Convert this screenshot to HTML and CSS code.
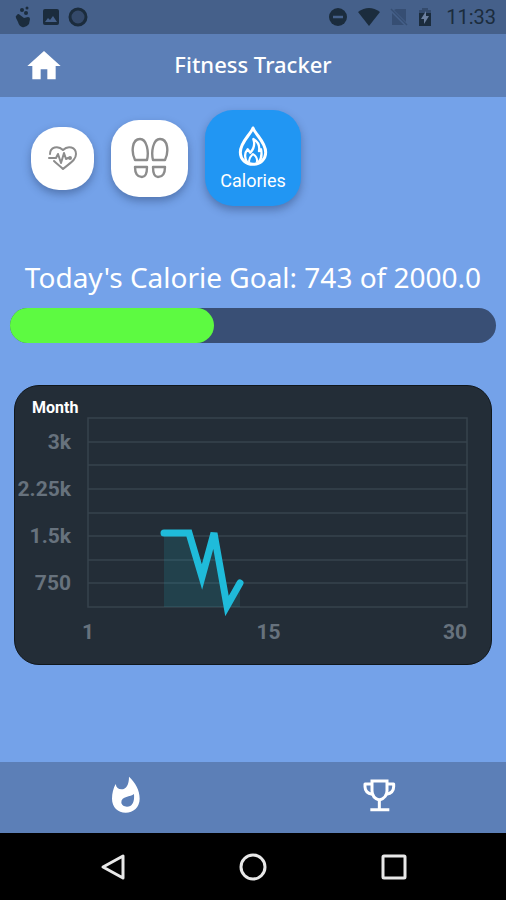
FILE: index.html
```html
<!DOCTYPE html>
<html lang="en">

<head>
    <meta charset="UTF-8">
    <meta name="viewport" content="width=device-width, initial-scale=1.0">
    <title>Fitness Tracker</title>
    <link rel="stylesheet" href="styles.css">
</head>

<body>
    <div class="status-bar">
        <div class="status-group">
            <svg width="20" height="22" viewBox="0 0 20 22">
                <path d="M3 9q1-2 3 0l4 3 4-1q2 0 2 2l-1 5q-3 4-7 3-3-1-4-5l-2-4q-1-2 1-3z" fill="#1b2c3d" />
                <circle cx="8" cy="4" r="2" fill="#1b2c3d" />
                <circle cx="13" cy="2" r="1.5" fill="#1b2c3d" />
                <circle cx="12" cy="7" r="2" fill="#1b2c3d" />
            </svg>
            <svg width="18" height="18" viewBox="0 0 18 18">
                <rect x="1" y="1" width="16" height="16" rx="2" fill="#1b2c3d" />
                <path d="M3 14l3-4 2 2 3-4 4 6z" fill="#45608a" />
            </svg>
            <svg width="20" height="20" viewBox="0 0 20 20">
                <circle cx="10" cy="10" r="8" fill="#34496a" stroke="#1b2c3d" stroke-width="3" />
            </svg>
        </div>
        <div class="status-group status-right">
            <svg width="20" height="20" viewBox="0 0 20 20">
                <circle cx="10" cy="10" r="9" fill="#1b2c3d" />
                <path d="M5 10h10" stroke="#45608a" stroke-width="2.5" />
            </svg>
            <svg width="22" height="20" viewBox="0 0 22 20">
                <path d="M0 5q11-8 22 0L11 19z" fill="#1b2c3d" />
            </svg>
            <svg width="18" height="20" viewBox="0 0 18 20">
                <path d="M6 2h10v13L4 3zM2 6l12 12H2z" fill="#364e73" />
                <path d="M1 2l16 16" stroke="#364e73" stroke-width="1.5" />
            </svg>
            <svg width="14" height="20" viewBox="0 0 14 20">
                <path d="M4 1h6v2h3v4H1V3h3z" fill="#344b6d" />
                <path d="M1 6h12v13H1z" fill="#1b2c3d" />
                <path d="M8 4l-5 8h3v5l5-8H8z" fill="#6b7f9f" />
            </svg>
            <span class="clock">11:33</span>
        </div>
    </div>

    <header class="app-bar">
        <button class="icon-button" aria-label="Home">
            <svg width="40" height="40" viewBox="0 0 24 24">
                <path d="M10 20v-6h4v6h5v-8h3L12 3 2 12h3v8z" fill="#fff" />
            </svg>
        </button>
        <h1>Fitness Tracker</h1>
    </header>

    <main>
        <div class="tabs">
            <button class="tab tab-small" aria-label="Heart rate">
                <svg width="30" height="26" viewBox="0 0 30 26" fill="none" stroke="#8c8c8c" stroke-width="2" stroke-linejoin="round" stroke-linecap="round">
                    <path d="M2 9C2 2 10 0 15 5c5-5 13-3 13 4 0 6-6 9-13 15-3-3-6-5-9-8" />
                    <path d="M1 13h7l2-4 3 9 3-10 2 6 2-1h2" />
                    <circle cx="22" cy="13" r="1" />
                </svg>
            </button>
            <button class="tab tab-medium" aria-label="Steps">
                <svg width="38" height="42" viewBox="0 0 38 42" fill="none" stroke="#8c8c8c" stroke-width="2.4" stroke-linejoin="round">
                    <path d="M4 23C0 15 1 2 9 2c7 0 9 13 7 21z" />
                    <path d="M34 23c4-8 3-21-5-21-7 0-9 13-7 21z" />
                    <path d="M4 30h12c0 5-1 10-5 10-5 0-7-4-7-10zM22 30h12c0 6-2 10-7 10-4 0-5-5-5-10z" />
                </svg>
            </button>
            <button class="tab tab-large">
                <svg width="30" height="40" viewBox="32 18 90 120" fill="none" stroke="#fff" stroke-width="9" stroke-linejoin="round">
                    <path d="M77 24C86 46 115 66 115 97C115 119 98 133 77 133C56 133 39 119 39 97C39 66 68 46 77 24z" />
                    <path d="M60 128C50 114 52 98 61 88L69 98C80 86 84 74 78 57C93 66 98 78 95 93L101 88C105 106 101 119 93 128" stroke-width="7" />
                    <path d="M66 128C62 114 71 108 77 102C86 108 92 116 88 128" stroke-width="6" />
                </svg>
                <span>Calories</span>
            </button>
        </div>

        <h2>Today's Calorie Goal: 743 of 2000.0</h2>
        <div class="progress">
            <div class="progress-fill" style="width: 42%"></div>
        </div>

        <section class="chart-card">
            <h3>Month</h3>
            <div class="chart">
                <div class="y-labels">
                    <span>3k</span>
                    <span>2.25k</span>
                    <span>1.5k</span>
                    <span>750</span>
                </div>
                <div class="plot">
                    <svg viewBox="0 0 379 189" fill="none">
                        <path d="M0 24h379M0 47h379M0 71h379M0 95h379M0 118h379M0 142h379M0 165h379" stroke="#37434d" stroke-width="1.5" />
                        <rect width="379" height="189" stroke="#37434d" stroke-width="1.5" />
                        <path d="M76 115H101L114 159L126 115L139 188L152 165V189H76z" fill="#23b6c6" fill-opacity="0.15" />
                        <path d="M76 115H101L114 159L126 115L139 188L152 165" stroke="#1fbbda" stroke-width="7" stroke-linecap="round" />
                    </svg>
                    <div class="x-labels">
                        <span>1</span>
                        <span>15</span>
                        <span>30</span>
                    </div>
                </div>
            </div>
        </section>
    </main>

    <nav class="bottom-nav">
        <button class="icon-button" aria-label="Calories">
            <svg width="45" height="50" viewBox="0 0 135 150">
                <path d="M75 20C94 38 107 60 107 86C107 112 88 128 65 128C42 128 24 112 24 86C24 70 28 55 35 42C37 53 43 58 52 58C67 58 75 44 75 20zM90 72C80 81 52 78 52 97C52 105 60 110 69 110C84 110 92 98 90 72z" fill="#fff" fill-rule="evenodd" />
            </svg>
        </button>
        <button class="icon-button" aria-label="Achievements">
            <svg width="45" height="50" viewBox="0 0 135 150" fill="none" stroke="#fff" stroke-width="9">
                <path d="M45 33H90V62C90 76 80 86 67 90C54 86 45 76 45 62z" />
                <path d="M45 42H24V50C24 62 32 70 46 73M90 42H110V50C110 62 102 70 88 73" stroke-linejoin="round" />
                <path d="M67 88V119M40 119H97" />
            </svg>
        </button>
    </nav>

    <div class="system-nav">
        <button class="icon-button" aria-label="Back">
            <svg width="28" height="28" viewBox="0 0 28 28">
                <path d="M25 3v22L5 14z" fill="none" stroke="#e8e8e8" stroke-width="3" stroke-linejoin="round" />
            </svg>
        </button>
        <button class="icon-button" aria-label="Home screen">
            <svg width="28" height="28" viewBox="0 0 28 28">
                <circle cx="14" cy="14" r="12" fill="none" stroke="#e8e8e8" stroke-width="3" />
            </svg>
        </button>
        <button class="icon-button" aria-label="Recent apps">
            <svg width="28" height="28" viewBox="0 0 28 28">
                <rect x="3" y="3" width="22" height="22" rx="1" fill="none" stroke="#e8e8e8" stroke-width="3" />
            </svg>
        </button>
    </div>
</body>

</html>
```

FILE: styles.css
```css
* {
    box-sizing: border-box;
}

body {
    margin: 0;
    min-height: 100vh;
    display: flex;
    flex-direction: column;
    background: #74a2e9;
    color: #fff;
    font-family: Roboto, sans-serif;
}

button {
    border: none;
    padding: 0;
    color: inherit;
    font-family: inherit;
    cursor: pointer;
}

svg {
    display: block;
}

.status-bar {
    display: flex;
    justify-content: space-between;
    align-items: center;
    height: 34px;
    padding: 0 10px 0 14px;
    background: #45608a;
}

.status-group {
    display: flex;
    align-items: center;
    gap: 8px;
}

.status-right {
    gap: 10px;
}

.clock {
    margin-left: 4px;
    color: #1b2c3d;
    font-size: 20px;
    line-height: 20px;
}

.app-bar {
    display: grid;
    grid-template-columns: 40px 1fr 40px;
    align-items: center;
    height: 63px;
    padding: 0 24px;
    background: #5c7fb7;
}

.icon-button {
    background: none;
}

h1 {
    margin: 0;
    padding-bottom: 4px;
    text-align: center;
    font-family: "Noto Sans", sans-serif;
    font-size: 22px;
    font-weight: 500;
}

main {
    flex: 1;
    padding: 13px 14px 0;
}

.tabs {
    display: flex;
    align-items: center;
    gap: 17px;
    padding-left: 17px;
}

.tab {
    display: flex;
    flex-direction: column;
    align-items: center;
    justify-content: center;
    gap: 4px;
    background: #fff;
    border-radius: 28px;
    box-shadow: 0 4px 8px rgba(30, 50, 90, 0.4);
}

.tab-small {
    width: 63px;
    height: 63px;
}

.tab-medium {
    width: 77px;
    height: 77px;
}

.tab-large {
    width: 96px;
    height: 96px;
    background: #2196f3;
    font-size: 18px;
}

h2 {
    margin: 51px 0 11px;
    text-align: center;
    font-family: "Noto Sans", sans-serif;
    font-size: 28px;
    font-weight: 400;
    line-height: 40px;
    white-space: nowrap;
}

.progress {
    height: 35px;
    margin: 0 -4px;
    border-radius: 18px;
    background: #394f75;
}

.progress-fill {
    height: 100%;
    border-radius: 18px;
    background: #5dfa41;
}

.chart-card {
    margin-top: 42px;
    padding: 12px 24px 17px 0;
    border: 1px solid #10171c;
    border-radius: 25px;
    background: #232d37;
}

h3 {
    margin: 0 0 0 17px;
    font-size: 16px;
    font-weight: 700;
    line-height: 20px;
}

.chart {
    display: grid;
    grid-template-columns: 56px 1fr;
    column-gap: 17px;
    color: #67727d;
    font-size: 21px;
    font-weight: 700;
}

.y-labels {
    display: flex;
    flex-direction: column;
    align-items: flex-end;
    padding-top: 1px;
    line-height: 47px;
}

.plot svg {
    width: 100%;
    overflow: visible;
}

.x-labels {
    display: flex;
    justify-content: space-between;
    margin: 10px 0 0 -6px;
    line-height: 30px;
}

.bottom-nav {
    display: flex;
    justify-content: space-around;
    align-items: center;
    height: 71px;
    padding-bottom: 5px;
    background: #5c7fb7;
}

.system-nav {
    display: flex;
    justify-content: space-between;
    align-items: center;
    height: 67px;
    padding: 0 98px;
    background: #000;
}
```
